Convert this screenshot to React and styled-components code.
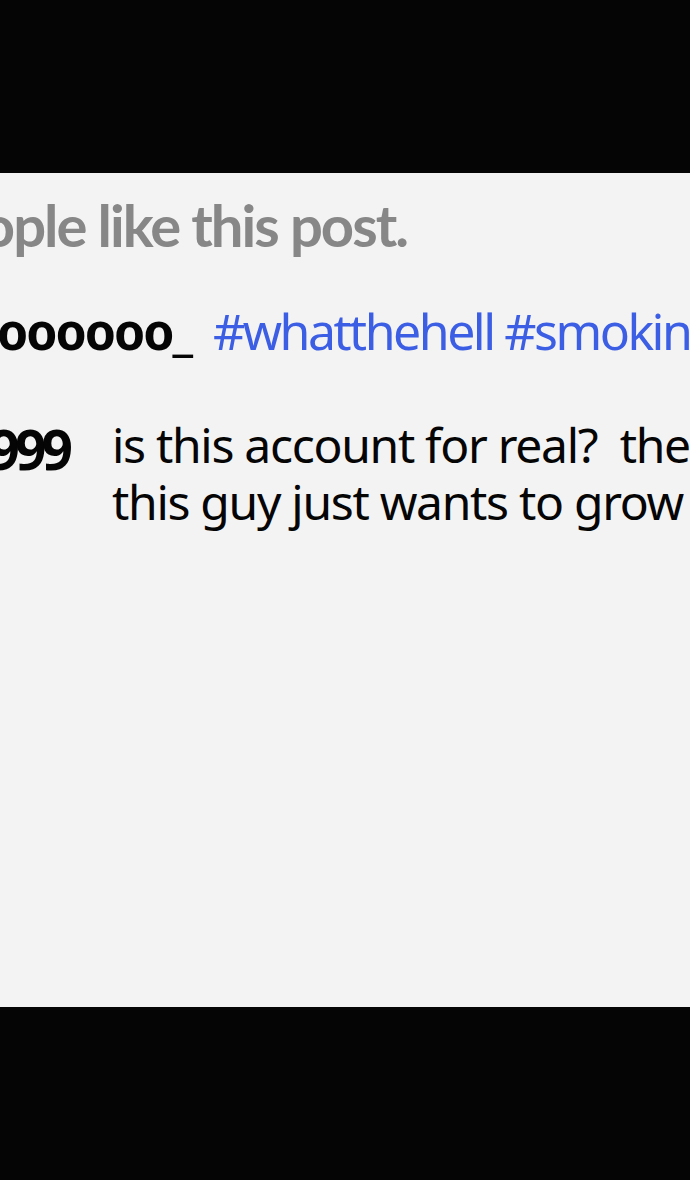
import React from 'react'
import styled, { createGlobalStyle } from 'styled-components'

const GlobalStyle = createGlobalStyle`
  html,
  body {
    margin: 0;
    padding: 0;
    background: #050505;
  }

  body {
    overflow: hidden;
  }
`

const Screen = styled.div`
  display: flex;
  flex-direction: column;
  width: 690px;
  height: 1180px;
  overflow: hidden;
  background: #050505;
`

const Letterbox = styled.div`
  flex: none;
  height: 173px;
  background: #050505;
`

const Frame = styled.main`
  flex: 1;
  display: flex;
  flex-direction: column;
  padding-top: 17px;
  overflow: hidden;
  background: #f3f3f3;
  color: #050505;
  font-family: 'Noto Sans', 'Open Sans', sans-serif;
  white-space: nowrap;
`

// keeps the end of its text at a fixed x, the start runs off the left edge
const Clip = styled.div`
  flex: none;
  display: flex;
  justify-content: flex-end;
  width: ${(p) => p.$width}px;
`

const Likes = styled.div`
  display: flex;
  font-family: Lato, 'Noto Sans', sans-serif;
  font-weight: 700;
  font-size: 58px;
  line-height: 70px;
  letter-spacing: -2px;
  color: #878787;
`

const CaptionRow = styled.div`
  display: flex;
  align-items: baseline;
  gap: 22px;
  margin-top: 37px;
  font-size: 50px;
  line-height: 68px;
  letter-spacing: -2px;
`

const Username = styled.span`
  font-weight: 700;
  font-size: ${(p) => p.$size || 50}px;
  letter-spacing: ${(p) => p.$spacing || -2}px;
`

const Tags = styled.span`
  font-weight: 400;
  letter-spacing: -2.5px;
  color: #3b5ee4;
`

const CommentRow = styled.div`
  display: flex;
  align-items: flex-start;
  gap: 44px;
  margin-top: 51px;
  line-height: 57px;
`

const CommentName = styled(Clip)`
  padding-top: 4px;
`

const CommentText = styled.div`
  display: flex;
  flex-direction: column;
  font-size: 48px;
  letter-spacing: -1.3px;
  white-space: pre;
`

const App = () => (
  <>
    <GlobalStyle />
    <Screen>
      <Letterbox />
      <Frame>
        <Likes>
          <Clip $width={407}>12 people like this post.</Clip>
        </Likes>

        <CaptionRow>
          <Clip $width={191}>
            <Username>hoooooooo_</Username>
          </Clip>
          <Tags>#whatthehell #smoking #fake</Tags>
        </CaptionRow>

        <CommentRow>
          <CommentName $width={68}>
            <Username $size={55} $spacing={-5}>
              minjun1999
            </Username>
          </CommentName>
          <CommentText>
            <span>is this account for real?  the  pictures are all fake</span>
            <span>this guy just wants to grow  his followers</span>
          </CommentText>
        </CommentRow>
      </Frame>
      <Letterbox />
    </Screen>
  </>
)

export default App
